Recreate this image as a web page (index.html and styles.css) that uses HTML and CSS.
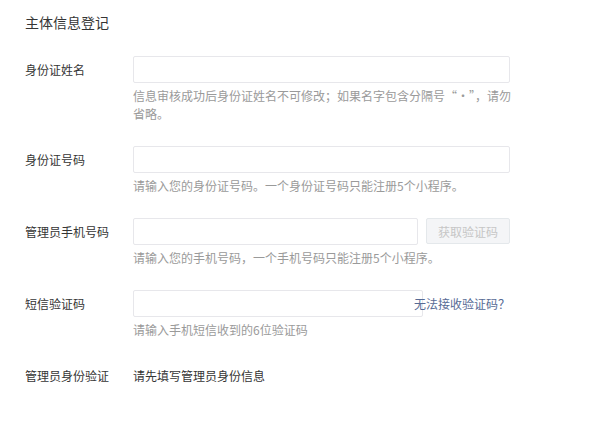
FILE: index.html
```html
<!DOCTYPE html>
<html lang="zh-CN">
<head>
  <meta charset="UTF-8" />
  <meta name="viewport" content="width=device-width, initial-scale=1.0" />
  <title>主体信息登记</title>
  <link rel="stylesheet" href="styles.css">
</head>
<body>
  <div class="page">
    <h2 class="title">主体信息登记</h2>

    <div class="row">
      <label class="label">身份证姓名</label>
      <div class="field">
        <input class="input" type="text" />
        <p class="tips">信息审核成功后身份证姓名不可修改；如果名字包含分隔号“·”，请勿<br>省略。</p>
      </div>
    </div>

    <div class="row">
      <label class="label">身份证号码</label>
      <div class="field">
        <input class="input" type="text" />
        <p class="tips">请输入您的身份证号码。一个身份证号码只能注册5个小程序。</p>
      </div>
    </div>

    <div class="row">
      <label class="label">管理员手机号码</label>
      <div class="field">
        <div class="inline">
          <input class="input input-short" type="text" />
          <button class="btn" disabled>获取验证码</button>
        </div>
        <p class="tips">请输入您的手机号码，一个手机号码只能注册5个小程序。</p>
      </div>
    </div>

    <div class="row">
      <label class="label">短信验证码</label>
      <div class="field">
        <div class="inline code">
          <input class="input input-code" type="text" />
          <a class="link" href="#">无法接收验证码？</a>
        </div>
        <p class="tips">请输入手机短信收到的6位验证码</p>
      </div>
    </div>

    <div class="row">
      <label class="label">管理员身份验证</label>
      <div class="field">
        <div class="value">请先填写管理员身份信息</div>
      </div>
    </div>
  </div>
</body>
</html>
```

FILE: styles.css
```css
* {
  margin: 0;
  padding: 0;
  box-sizing: border-box;
}

body {
  font-family: "Noto Sans CJK SC", "Noto Sans", sans-serif;
  font-size: 12px;
  color: #353535;
  background: #fff;
}

.page {
  padding: 12px 0 0 25px;
}

.title {
  font-size: 14px;
  font-weight: normal;
  line-height: 20px;
  margin-bottom: 24px;
}

.row {
  display: flex;
  margin-bottom: 23px;
}

.label {
  width: 108px;
  line-height: 27px;
  flex-shrink: 0;
}

.field {
  width: 377px;
}

.input {
  display: block;
  width: 377px;
  height: 27px;
  border: 1px solid #e7e7eb;
  border-radius: 2px;
  outline: none;
  font: inherit;
  padding: 0 8px;
}

.inline {
  display: flex;
  justify-content: space-between;
}

.input-short {
  width: 285px;
}

.btn {
  width: 84px;
  height: 26px;
  border: 1px solid #e4e8eb;
  border-radius: 2px;
  background: #f4f5f7;
  color: #c6c6c6;
  font: inherit;
}

.code {
  position: relative;
}

.input-code {
  width: 290px;
}

.link {
  position: absolute;
  right: 0;
  top: 0;
  line-height: 27px;
  color: #576b95;
  text-decoration: none;
}

.tips {
  margin-top: 4px;
  line-height: 18px;
  color: #9a9a9a;
  white-space: nowrap;
}

.value {
  line-height: 27px;
}
```
